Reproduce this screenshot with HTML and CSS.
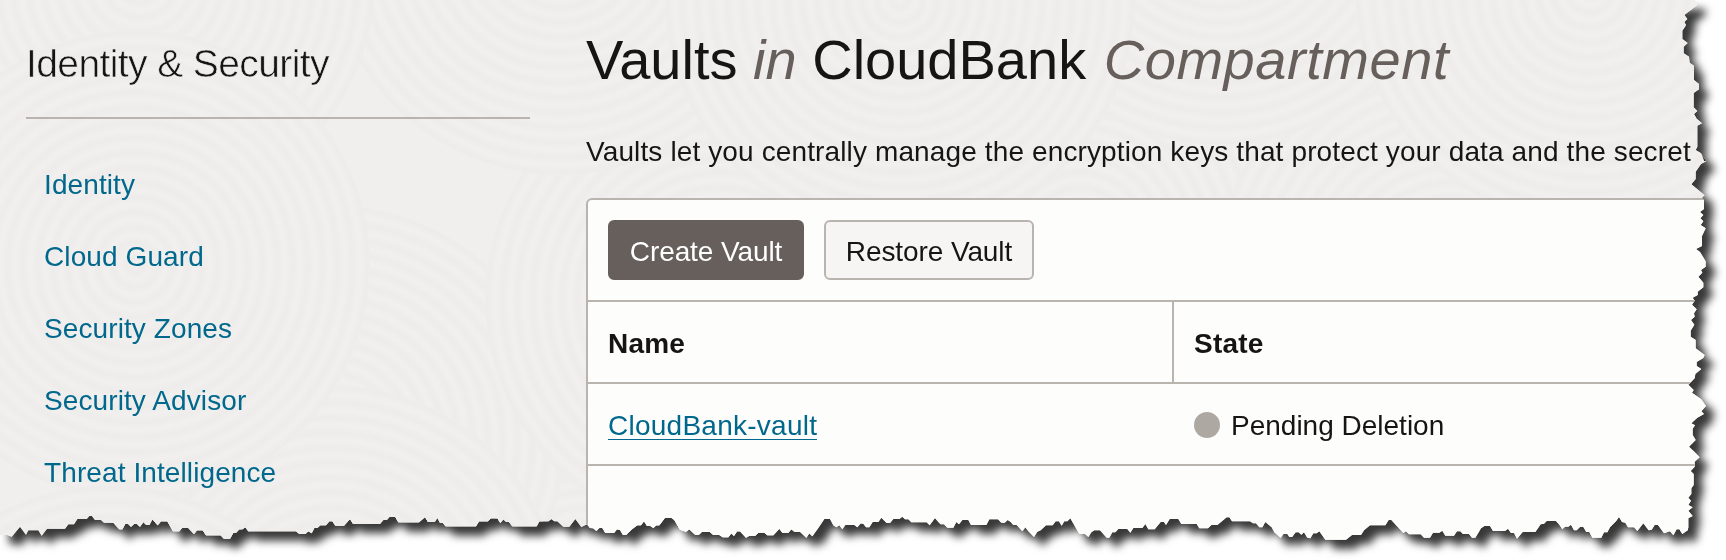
FILE: index.html
```
<!DOCTYPE html>
<html lang="en">
<head>
<meta charset="utf-8">
<title>Vaults</title>
<link rel="stylesheet" href="styles.css">
</head>
<body>
<svg class="defs" width="0" height="0" aria-hidden="true">
  <clipPath id="torn" clipPathUnits="userSpaceOnUse">
    <polygon transform="scale(.333333) translate(0 1500)" points="0,-1500 0,105 22,105 35,110 60,80 78,104 85,91 115,91 125,107 141,86 195,86 205,73 222,73 232,57 260,57 268,48 276,48 285,60 303,60 312,68 340,68 358,88 367,88 376,71 384,71 393,80 402,72 411,72 420,80 430,66 439,75 448,75 457,58 473,76 483,64 502,64 519,94 538,94 546,84 565,84 582,102 591,91 608,91 618,106 662,106 672,116 690,116 700,98 708,98 718,88 727,88 736,82 745,94 888,94 898,102 916,102 925,94 935,100 943,84 952,84 961,76 978,76 988,64 997,64 1006,77 1032,77 1050,57 1059,71 1140,71 1150,60 1160,60 1168,51 1186,51 1195,67 1257,67 1275,51 1284,66 1304,66 1304,-1500"/>
    <polygon transform="scale(.333333) translate(1290 1500)" points="0,-1500 0,66 14,66 22,53 30,68 38,68 47,79 138,79 147,64 174,64 183,55 202,55 211,69 220,58 229,66 237,66 247,79 320,79 328,64 355,64 364,57 373,64 382,64 400,80 418,80 436,57 454,81 471,73 480,84 490,85 499,93 508,84 517,84 526,99 552,99 561,88 570,90 579,105 588,105 606,88 622,76 633,76 642,64 651,78 661,78 670,84 679,76 688,76 705,53 724,53 733,60 750,89 768,95 778,88 796,105 806,105 815,96 840,96 850,105 868,105 878,112 895,112 904,100 912,108 921,94 930,94 948,113 957,108 975,108 985,98 1003,98 1012,106 1030,106 1048,86 1057,98 1075,98 1084,88 1093,95 1110,95 1129,113 1138,100 1147,109 1165,84 1183,57 1200,57 1210,76 1219,82 1228,76 1237,88 1246,75 1273,75 1282,82 1292,70 1300,70 1300,-1500"/>
    <polygon transform="scale(.333333) translate(2580 1500)" points="0,-1500 0,70 10,71 18,82 28,82 38,66 55,66 64,53 80,69 90,69 100,57 118,57 127,50 135,58 145,58 154,67 200,67 209,76 225,54 235,66 242,73 252,73 262,83 280,83 289,66 297,73 307,60 325,60 333,75 379,75 388,58 414,58 424,68 434,68 443,60 452,66 460,75 470,75 487,94 496,82 505,94 522,111 532,95 542,91 558,76 578,76 587,64 597,64 605,77 613,64 622,64 631,55 658,102 675,102 685,111 694,97 703,91 720,91 740,113 748,113 757,97 766,97 775,87 802,87 811,98 820,84 847,84 856,72 865,88 884,88 902,66 912,66 918,75 929,57 955,57 964,72 1010,72 1018,85 1044,85 1054,75 1072,75 1100,52 1108,52 1116,64 1170,64 1179,70 1188,70 1198,82 1207,82 1216,66 1235,82 1243,97 1262,114 1270,102 1282,102 1288,111 1297,111 1297,-1500"/>
    <polygon transform="scale(.333333) translate(3870 1500)" points="0,-1500 0,111 8,109 17,97 26,97 34,104 42,97 52,113 61,115 70,100 80,100 88,94 106,119 168,119 186,105 213,105 222,91 240,76 286,76 296,60 304,60 340,99 348,94 357,103 392,103 402,113 420,113 429,98 448,98 457,92 466,107 492,107 501,94 511,94 519,102 537,102 546,113 556,113 566,97 573,85 583,78 600,78 609,93 645,93 654,86 663,99 672,99 681,116 698,96 736,96 752,73 762,71 770,63 798,63 808,74 817,88 825,80 835,80 843,74 852,91 860,91 870,81 880,81 889,96 898,96 907,113 934,113 942,97 952,97 960,82 978,64 987,51 996,66 1006,68 1014,82 1032,82 1042,93 1060,70 1076,91 1085,89 1094,75 1104,75 1122,100 1140,94 1150,106 1160,88 1168,88 1177,102 1194,90 1194,-100 1000,-100 1000,-1500"/>
    <polygon transform="scale(.333333) translate(4920 0)" points="-300,0 165,0 172,15 133,45 142,57 133,66 138,75 134,82 127,92 127,117 143,129 131,140 131,160 147,170 149,188 162,197 162,240 177,252 177,268 161,279 161,322 172,333 162,342 170,356 186,370 172,377 172,440 167,450 183,460 198,484 183,492 167,515 167,537 154,553 194,586 186,594 192,601 192,627 180,636 190,645 181,655 190,664 182,675 197,685 186,708 186,738 168,747 180,756 197,784 197,800 183,810 187,818 175,830 190,848 190,862 173,875 173,885 158,893 164,902 156,914 170,928 162,940 164,950 153,960 163,974 152,992 152,1010 167,1020 167,1045 194,1065 190,1074 170,1086 170,1098 184,1107 166,1122 164,1135 145,1154 161,1170 156,1178 184,1198 198,1218 184,1234 192,1242 172,1253 154,1270 165,1276 158,1286 158,1305 167,1320 147,1340 163,1355 179,1372 164,1385 164,1400 152,1413 161,1422 161,1455 154,1465 154,1482 145,1493 153,1502 145,1515 158,1522 145,1532 158,1548 145,1555 145,1585 100,1560 -300,1510"/>
  </clipPath>
</svg>
<div class="shadow">
  <div class="page">
    <svg class="texture" width="1726" height="560" aria-hidden="true">
      <defs>
        <radialGradient id="g0" gradientUnits="userSpaceOnUse" cx="0" cy="0" r="15" spreadMethod="repeat">
          <stop offset="0" stop-color="#f1f0ee"/><stop offset=".5" stop-color="#edecea"/><stop offset="1" stop-color="#f1f0ee"/>
        </radialGradient>
        <circle id="rings" r="235" fill="url(#g0)"/>
      </defs>
      <use href="#rings" x="580" y="560"/>
      <use href="#rings" x="1250" y="240"/>
      <use href="#rings" x="330" y="440"/>
      <use href="#rings" x="720" y="300"/>
      <use href="#rings" x="1080" y="240"/>
      <use href="#rings" x="1450" y="280"/>
      <use href="#rings" x="330" y="620"/>
      <use href="#rings" x="560" y="-60"/>
      <use href="#rings" x="1220" y="-90"/>
      <use href="#rings" x="1590" y="-10"/>
      <use href="#rings" x="140" y="-20"/>
      <use href="#rings" x="900" y="0"/>
      <use href="#rings" x="135" y="265"/>
      <use href="#rings" x="110" y="720"/>
    </svg>
    <aside class="sidebar">
      <h2 class="sidebar-title">Identity &amp; Security</h2>
      <nav class="menu">
        <a class="menu-link">Identity</a>
        <a class="menu-link">Cloud Guard</a>
        <a class="menu-link">Security Zones</a>
        <a class="menu-link">Security Advisor</a>
        <a class="menu-link">Threat Intelligence</a>
      </nav>
    </aside>
    <main class="main">
      <h1 class="title">Vaults <em class="muted">in</em> CloudBank <em class="muted wide">Compartment</em></h1>
      <p class="intro">Vaults let you centrally manage the encryption keys that protect your data and the secret v</p>
      <section class="panel">
        <div class="toolbar">
          <button class="btn btn-primary">Create Vault</button>
          <button class="btn">Restore Vault</button>
        </div>
        <div class="row head">
          <div class="cell">Name</div>
          <div class="cell">State</div>
        </div>
        <div class="row">
          <div class="cell"><a class="vault-link">CloudBank-vault</a></div>
          <div class="cell"><span class="dot"></span><span class="state">Pending Deletion</span></div>
        </div>
      </section>
    </main>
  </div>
</div>
</body>
</html>
```
FILE: styles.css
```
* { box-sizing: border-box; }
body {
  margin: 0;
  width: 1726px;
  height: 560px;
  overflow: hidden;
  background: #fff;
  color: #161513;
  font-family: "Liberation Sans", Arial, sans-serif;
  font-size: 28px;
}
.defs { position: absolute; }
.shadow { filter: drop-shadow(9px 9px 4.5px rgba(0, 0, 0, .78)); }
.page {
  position: relative;
  display: flex;
  width: 1726px;
  height: 560px;
  overflow: hidden;
  background: #f0efed;
  clip-path: url(#torn);
}
.texture { position: absolute; inset: 0; }
.sidebar {
  position: relative;
  width: 504px;
  margin-left: 26px;
  flex: none;
}
.sidebar-title {
  margin: 0;
  height: 119px;
  padding-top: 41px;
  border-bottom: 2px solid #bab4ae;
  font-size: 39px;
  line-height: 45px;
  font-weight: 400;
  letter-spacing: -.6px;
  -webkit-text-stroke: .6px #efeeec;
}
.menu {
  display: flex;
  flex-direction: column;
  padding: 30px 0 0 18px;
}
.menu-link {
  height: 72px;
  line-height: 72px;
  color: #00688c;
  letter-spacing: .1px;
}
.main {
  position: relative;
  flex: none;
  width: 1140px;
  margin-left: 56px;
}
.title {
  margin: 0;
  padding-top: 28px;
  font-size: 56px;
  line-height: 64px;
  font-weight: 400;
  white-space: nowrap;
}
.muted { color: #665f5b; }
.wide { margin-left: 2px; letter-spacing: .55px; }
.intro {
  margin: 0;
  height: 106px;
  padding-top: 44px;
  line-height: 32px;
  letter-spacing: .125px;
  white-space: nowrap;
}
.panel {
  height: 400px;
  border: 2px solid #bab4ae;
  border-radius: 6px 0 0 0;
  background: #fdfdfb;
}
.toolbar {
  display: flex;
  gap: 20px;
  height: 102px;
  padding: 20px;
  border-bottom: 2px solid #bab4ae;
}
.btn {
  width: 210px;
  height: 60px;
  padding: 3px 0 0;
  border: 2px solid #bab4ae;
  border-radius: 6px;
  background: #f7f5f4;
  color: #161513;
  font: inherit;
  letter-spacing: -.1px;
  white-space: nowrap;
}
.btn-primary {
  width: 196px;
  border-color: #665f5b;
  background: #665f5b;
  color: #fff;
}
.row {
  display: grid;
  grid-template-columns: 586px 1fr;
  height: 82px;
  border-bottom: 2px solid #bab4ae;
}
.cell { display: flex; align-items: center; padding: 2px 0 0 20px; }
.head { font-weight: 700; }
.head .cell { padding-top: 4px; letter-spacing: .2px; }
.head .cell:first-child { border-right: 2px solid #bab4ae; }
.vault-link {
  height: 30px;
  line-height: 32px;
  border-bottom: 1px solid #00688c;
  color: #00688c;
  letter-spacing: .25px;
}
.dot {
  width: 26px;
  height: 26px;
  margin-right: 11px;
  border-radius: 50%;
  background: #aea8a2;
}
.state { padding-top: 1px; }
```
